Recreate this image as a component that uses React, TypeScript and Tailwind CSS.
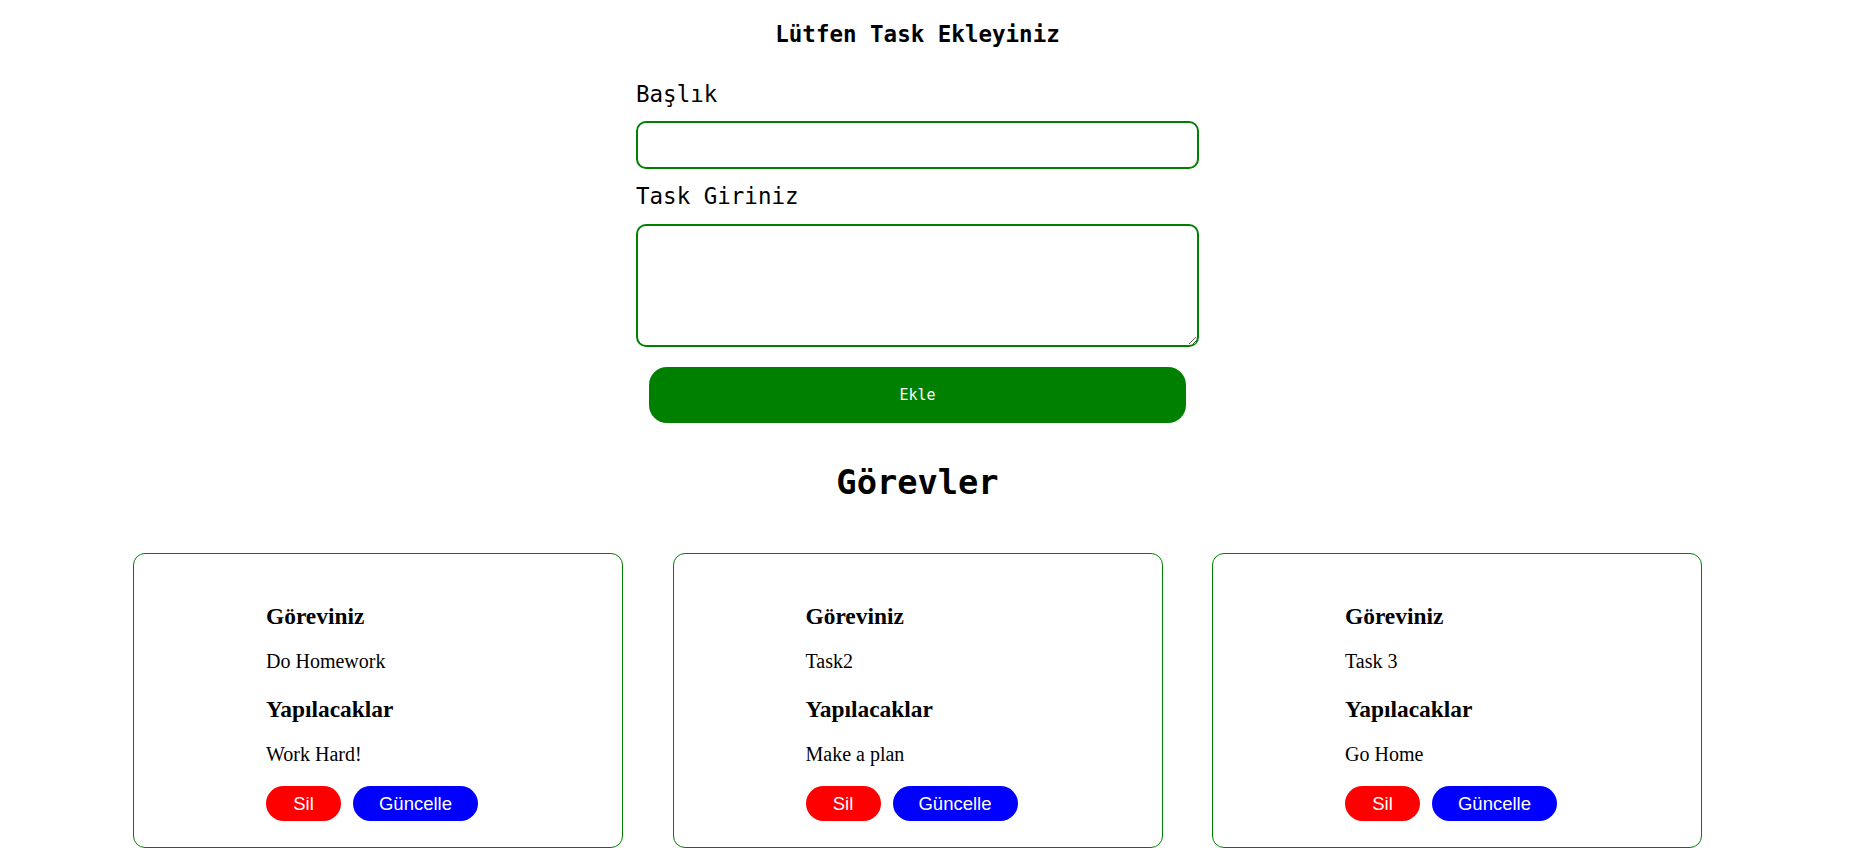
const tasks = [
  { title: "Do Homework", todo: "Work Hard!" },
  { title: "Task2", todo: "Make a plan" },
  { title: "Task 3", todo: "Go Home" },
];

const TaskCard = ({ title, todo }: { title: string; todo: string }) => {
  return (
    <div className="border border-[#008000] rounded-[12px] pl-[132px] pt-[49px] pb-[26px] font-['Liberation_Serif',serif] text-black">
      <h3 className="text-[23.4px] leading-[27px] font-bold">Göreviniz</h3>
      <p className="mt-[20px] text-[20px] leading-[23px]">{title}</p>
      <h3 className="mt-[23px] text-[23.4px] leading-[27px] font-bold">Yapılacaklar</h3>
      <p className="mt-[20px] text-[20px] leading-[23px]">{todo}</p>
      <div className="mt-[20px] flex gap-3 font-['Liberation_Sans',sans-serif] text-[18.5px] text-white">
        <button className="w-[75px] h-[35px] rounded-full bg-[#ff0000] flex items-center justify-center">
          Sil
        </button>
        <button className="w-[125px] h-[35px] rounded-full bg-[#0000ff] flex items-center justify-center">
          Güncelle
        </button>
      </div>
    </div>
  );
};

const App = () => {
  return (
    <div className="w-[1835px] min-h-[852px] bg-white flex flex-col items-center font-['DejaVu_Sans_Mono',monospace] text-black">
      <h3 className="mt-[21px] text-[22.5px] leading-[27px] font-bold">Lütfen Task Ekleyiniz</h3>

      <form className="mt-[33px] w-[563px] flex flex-col" onSubmit={(e) => e.preventDefault()}>
        <label className="text-[22.5px] leading-[27px]">Başlık</label>
        <input
          type="text"
          className="mt-[13px] h-[48px] border-2 border-[#008000] rounded-[10px] px-3 outline-none"
        />
        <label className="mt-[14px] text-[22.5px] leading-[27px]">Task Giriniz</label>
        <textarea className="mt-[14px] h-[123px] border-2 border-[#008000] rounded-[10px] px-3 py-2 outline-none" />
        <button
          type="submit"
          className="mt-[20px] mx-[13px] h-[56px] rounded-[18px] bg-[#008000] text-white text-[15px] flex items-center justify-center"
        >
          Ekle
        </button>
      </form>

      <h1 className="mt-[40px] text-[33.7px] leading-[40px] font-bold">Görevler</h1>

      <div className="mt-[50px] w-[1569px] grid grid-cols-3 gap-x-[49.5px]">
        {tasks.map((t) => (
          <TaskCard key={t.title} title={t.title} todo={t.todo} />
        ))}
      </div>
    </div>
  );
};

export default App;
